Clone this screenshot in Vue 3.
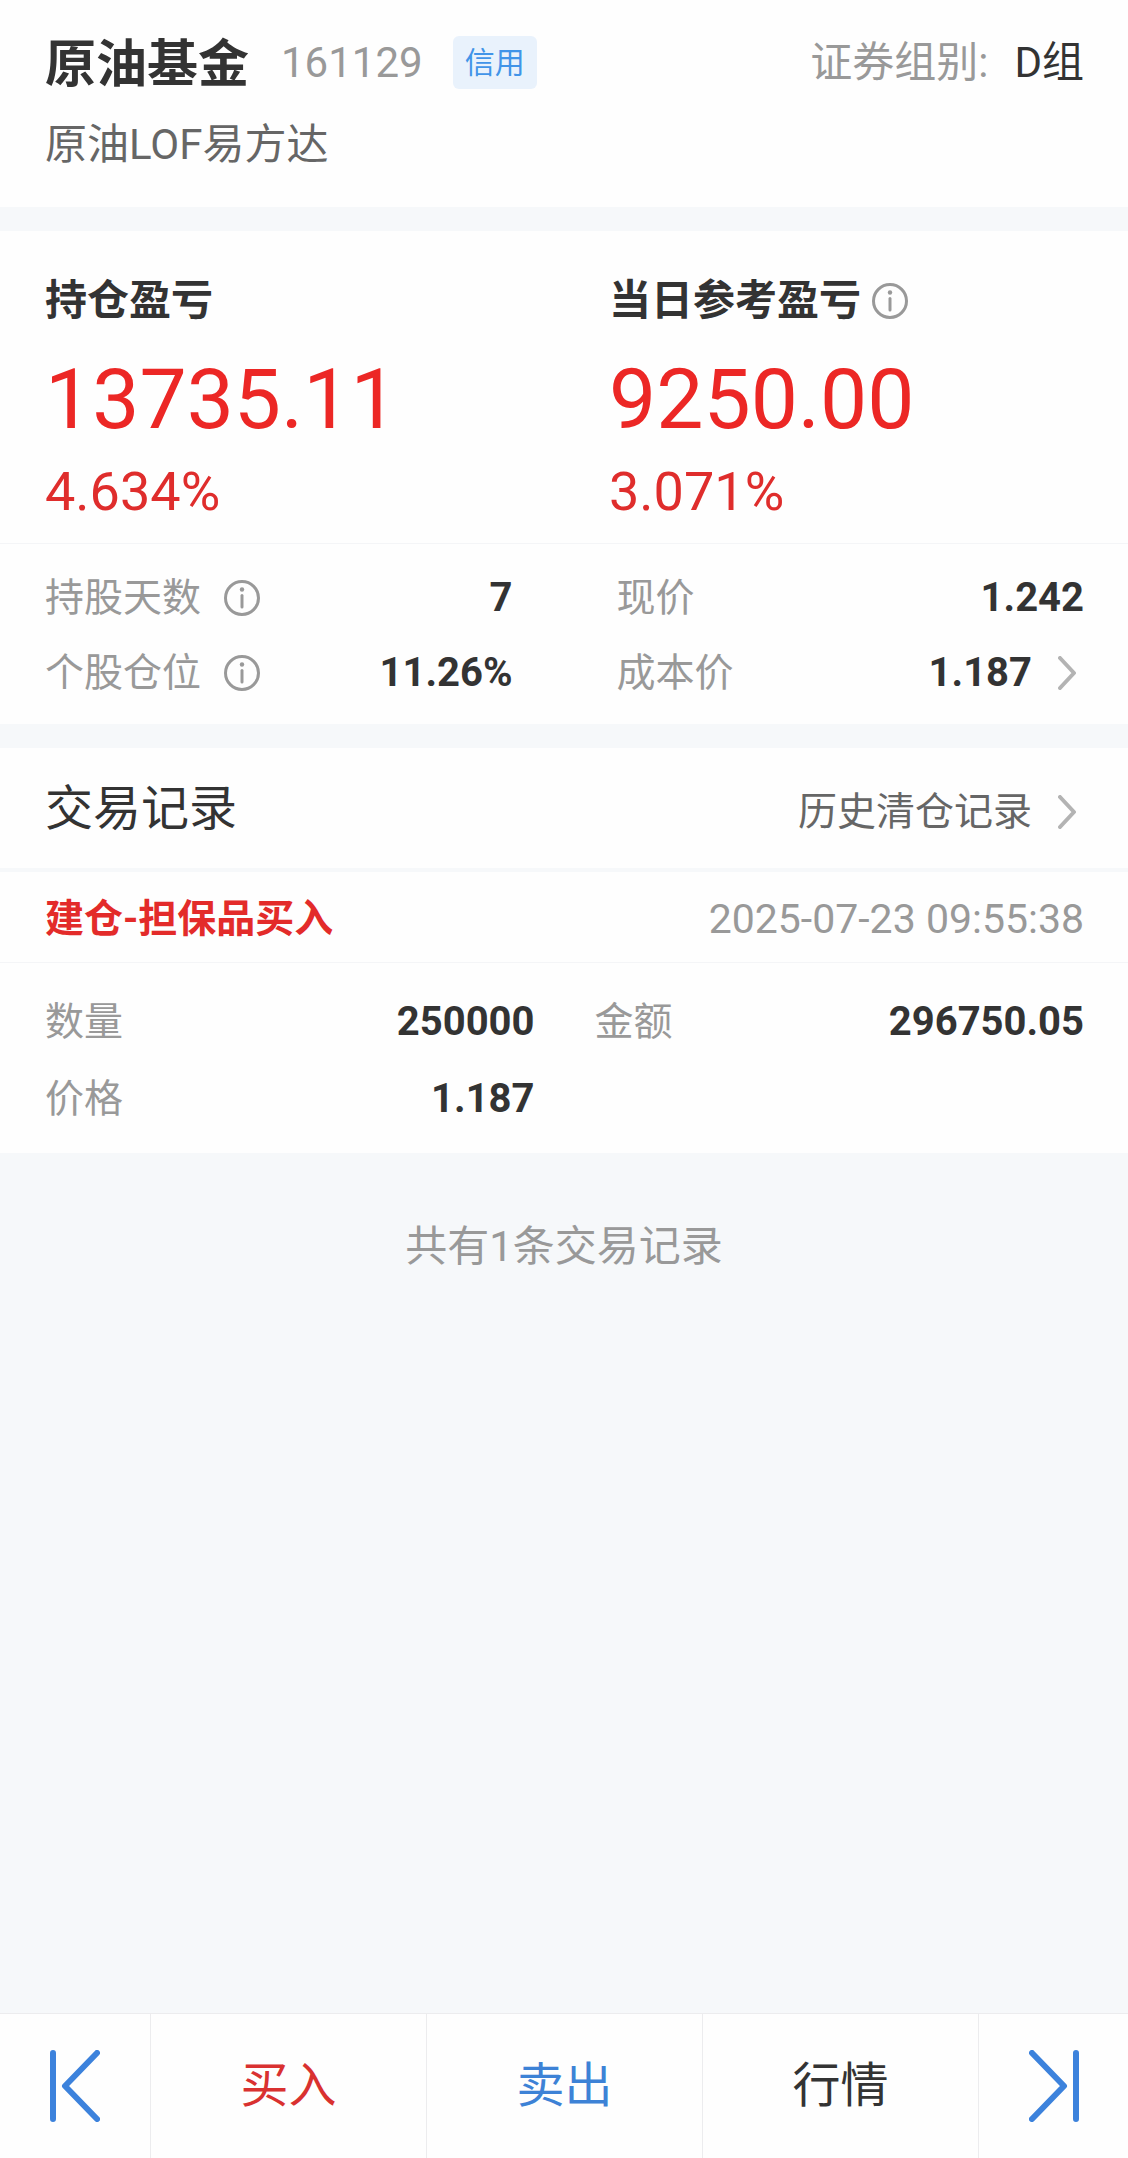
<template>
  <div class="page">
    <header class="card stock-head">
      <div class="stock-row">
        <h1 class="stock-name">{{ stock.name }}</h1>
        <span class="stock-code">{{ stock.code }}</span>
        <span class="stock-tag">{{ stock.tag }}</span>
        <span class="group-label">证券组别:</span>
        <span class="group-value">{{ stock.group }}</span>
      </div>
      <div class="stock-full">{{ stock.fullName }}</div>
    </header>

    <section class="card">
      <div class="profit">
        <div v-for="item in profits" :key="item.title" class="profit-col">
          <h2 class="profit-title">
            {{ item.title }}
            <button v-if="item.tip" class="icon-btn" aria-label="说明" @click="toggleTip(item.title)">
              <svg class="info-icon" viewBox="0 0 36 36">
                <circle cx="18" cy="18" r="16.5" />
                <circle class="dot" cx="18" cy="9.5" r="2.2" />
                <path d="M18 15.5V27" />
              </svg>
            </button>
          </h2>
          <div class="profit-value">{{ item.value }}</div>
          <div class="profit-rate">{{ item.rate }}</div>
        </div>
      </div>
      <div class="detail">
        <div v-for="item in details" :key="item.label" class="cell">
          <span class="cell-label">{{ item.label }}</span>
          <button v-if="item.tip" class="icon-btn" aria-label="说明" @click="toggleTip(item.label)">
            <svg class="info-icon" viewBox="0 0 36 36">
              <circle cx="18" cy="18" r="16.5" />
              <circle class="dot" cx="18" cy="9.5" r="2.2" />
              <path d="M18 15.5V27" />
            </svg>
          </button>
          <span class="cell-value">{{ item.value }}</span>
          <button v-if="item.more" class="icon-btn" aria-label="查看详情">
            <svg class="arrow" viewBox="0 0 18 34"><path d="M2 2L16 17L2 32" /></svg>
          </button>
        </div>
      </div>
    </section>

    <section class="card">
      <div class="record-head">
        <h2 class="record-heading">交易记录</h2>
        <a class="history" href="#">
          历史清仓记录
          <svg class="arrow" viewBox="0 0 18 34"><path d="M2 2L16 17L2 32" /></svg>
        </a>
      </div>
      <article v-for="record in records" :key="record.time">
        <div class="record-title">
          <span class="record-type">{{ record.type }}</span>
          <time class="record-time">{{ record.time }}</time>
        </div>
        <div class="record-body">
          <div v-for="field in record.fields" :key="field.label" class="cell">
            <span class="cell-label">{{ field.label }}</span>
            <span class="cell-value">{{ field.value }}</span>
          </div>
        </div>
      </article>
    </section>

    <p class="total">共有{{ records.length }}条交易记录</p>

    <!-- 底部操作栏 -->
    <nav class="bottom-bar">
      <button class="bar-btn bar-side" aria-label="上一只">
        <svg class="step-icon" viewBox="0 0 50 72"><path d="M3 3V69M47 3L15 36L47 69" /></svg>
      </button>
      <button class="bar-btn buy">买入</button>
      <button class="bar-btn sell">卖出</button>
      <button class="bar-btn">行情</button>
      <button class="bar-btn bar-side" aria-label="下一只">
        <svg class="step-icon" viewBox="0 0 50 72"><path d="M47 3V69M3 3L35 36L3 69" /></svg>
      </button>
    </nav>
  </div>
</template>

<script setup>
import { ref } from 'vue';

const stock = {
  name: '原油基金',
  code: '161129',
  tag: '信用',
  group: 'D组',
  fullName: '原油LOF易方达'
};

const profits = [
  { title: '持仓盈亏', value: '13735.11', rate: '4.634%' },
  { title: '当日参考盈亏', value: '9250.00', rate: '3.071%', tip: true }
];

const details = [
  { label: '持股天数', value: '7', tip: true },
  { label: '现价', value: '1.242' },
  { label: '个股仓位', value: '11.26%', tip: true },
  { label: '成本价', value: '1.187', more: true }
];

const records = [
  {
    type: '建仓-担保品买入',
    time: '2025-07-23 09:55:38',
    fields: [
      { label: '数量', value: '250000' },
      { label: '金额', value: '296750.05' },
      { label: '价格', value: '1.187' }
    ]
  }
];

const activeTip = ref('');

function toggleTip(name) {
  activeTip.value = activeTip.value === name ? '' : name;
}
</script>

<style>
body {
  margin: 0;
  background: #f6f8fa;
}
</style>

<style scoped>
.page {
  min-height: 100vh;
  display: flex;
  flex-direction: column;
  font-family: Roboto, "Noto Sans CJK SC", sans-serif;
  font-size: 42px;
  line-height: 56px;
  color: #333;
  background: #f6f8fa;
}
h1,
h2,
p {
  margin: 0;
}
button {
  padding: 0;
  border: none;
  background: none;
  font-family: inherit;
  line-height: inherit;
  color: inherit;
}
svg {
  display: block;
  fill: none;
  stroke-linecap: round;
  stroke-linejoin: round;
}
.card {
  background: #fefefe;
  margin-bottom: 24px;
}
.stock-head {
  padding: 28px 44px 34px 45px;
}
.stock-row {
  display: flex;
  align-items: center;
  height: 69px;
}
.stock-name {
  padding-top: 4px;
  font-size: 51px;
}
.stock-code {
  margin-left: 32px;
  color: #999;
}
.stock-tag {
  margin-left: 30px;
  padding: 0 12px;
  border-radius: 6px;
  font-size: 30px;
  line-height: 53px;
  color: #4194e8;
  background: #e9f2fc;
}
.group-label {
  margin-left: auto;
  color: #999;
}
.group-value {
  margin-left: 26px;
}
.stock-full {
  margin-top: 20px;
  color: #666;
}
.profit {
  display: grid;
  grid-template-columns: 1fr 1fr;
  padding: 38px 0 26px;
  border-bottom: 1px solid #f4f5f7;
}
.profit-col {
  padding-left: 45px;
}
.profit-title {
  display: flex;
  align-items: center;
  gap: 11px;
  font-size: 42px;
  line-height: 64px;
}
.profit-value {
  font-size: 84px;
  line-height: 134px;
  color: #ec2725;
}
.profit-rate {
  font-size: 54px;
  line-height: 50px;
  color: #df2d2c;
}
.info-icon {
  width: 36px;
  height: 36px;
  stroke: #999;
  stroke-width: 3;
}
.info-icon .dot {
  fill: #999;
  stroke: none;
}
.arrow {
  width: 18px;
  height: 34px;
  margin: 0 8px 0 26px;
  stroke: #b3b3b3;
  stroke-width: 4;
}
.detail {
  display: grid;
  grid-template-columns: 1fr 1fr;
  column-gap: 104px;
  grid-auto-rows: 75px;
  padding: 16px 44px 14px 45px;
}
.cell {
  display: flex;
  align-items: center;
}
.cell-label {
  margin-right: 23px;
  font-size: 39px;
  color: #999;
}
.cell-value {
  margin-left: auto;
  font-size: 40px;
  font-weight: 700;
}
.record-head {
  display: flex;
  justify-content: space-between;
  align-items: baseline;
  height: 120px;
  padding: 0 44px 0 45px;
  line-height: 122px;
  border-bottom: 4px solid #f6f8fa;
}
.record-heading {
  font-size: 48px;
  font-weight: 400;
}
.history {
  display: flex;
  align-items: center;
  font-size: 39px;
  color: #666;
  text-decoration: none;
}
.record-title {
  display: flex;
  justify-content: space-between;
  height: 90px;
  padding: 0 44px 0 45px;
  line-height: 94px;
  border-bottom: 1px solid #f4f5f7;
}
.record-type {
  font-size: 39px;
  font-weight: 700;
  color: #e32b2a;
}
.record-time {
  font-size: 41px;
  color: #999;
}
.record-body {
  display: grid;
  grid-template-columns: 1fr 1fr;
  column-gap: 60px;
  grid-auto-rows: 77px;
  padding: 20px 44px 16px 45px;
}
.total {
  margin-top: 42px;
  text-align: center;
  color: #999;
}
.bottom-bar {
  position: sticky;
  bottom: 0;
  display: flex;
  height: 144px;
  margin-top: auto;
  border-top: 1px solid #ececee;
  background: #fefefe;
}
.bar-btn {
  flex: 1;
  font-size: 48px;
}
.bar-btn + .bar-btn {
  border-left: 1px solid #ececee;
}
.bar-side {
  flex: 0 0 150px;
}
.buy {
  color: #d93130;
}
.sell {
  color: #3d82d6;
}
.step-icon {
  width: 50px;
  height: 72px;
  margin: 0 auto;
  stroke: #3c82dc;
  stroke-width: 6;
}
</style>
